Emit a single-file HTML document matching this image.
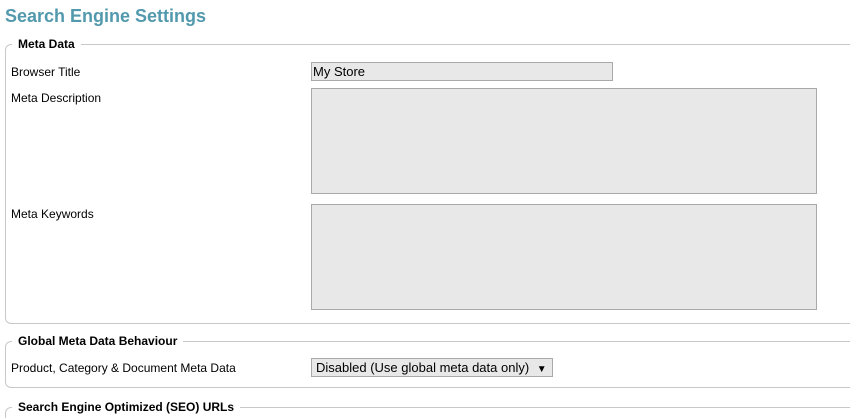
<!DOCTYPE html>
<html><head><style>
html,body{margin:0;width:850px;height:418px;overflow:hidden}
body{background:#fff;font-family:"Liberation Sans",Arial,sans-serif;position:relative}
h1{position:absolute;left:5px;top:6px;margin:0;font-size:18px;font-weight:bold;color:#5299ad}
.fs{position:absolute;left:5px;width:860px;border:1px solid #c8c8c8;border-radius:6px}
.lg{position:absolute;background:#fff;padding:0 6px;font-size:12px;font-weight:bold;color:#000}
.lb{position:absolute;left:11px;font-size:12px;color:#000}
.in{position:absolute;left:311px;background:#e8e8e8;border:1px solid #a9a9a9;box-sizing:border-box}
</style></head><body>
<h1>Search Engine Settings</h1>
<div class="fs" style="top:44px;height:278px"></div>
<div class="lg" style="left:12px;top:37px">Meta Data</div>
<div class="lb" style="top:65px">Browser Title</div>
<div class="in" style="top:62px;width:302px;height:19px;font-size:13px;padding:1px 0 0 1px">My Store</div>
<div class="lb" style="top:91px">Meta Description</div>
<div class="in" style="top:88px;width:506px;height:106px"></div>
<div class="lb" style="top:207px">Meta Keywords</div>
<div class="in" style="top:204px;width:506px;height:106px"></div>
<div class="fs" style="top:341px;height:45px"></div>
<div class="lg" style="left:12px;top:334px">Global Meta Data Behaviour</div>
<div class="lb" style="top:361px">Product, Category &amp; Document Meta Data</div>
<div class="in" style="top:358px;width:242px;height:19px;font-size:13px;padding:1px 0 0 4px">Disabled (Use global meta data only) <span style="font-size:10px;margin-left:4px">▼</span></div>
<div class="fs" style="top:407px;height:20px"></div>
<div class="lg" style="left:12px;top:400px">Search Engine Optimized (SEO) URLs</div>
</body></html>
